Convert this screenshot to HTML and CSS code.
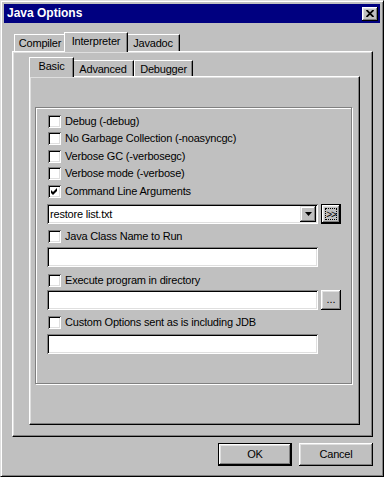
FILE: index.html
```html
<!DOCTYPE html>
<html lang="en">
<head>
    <meta charset="UTF-8">
    <title>Java Options</title>
    <link rel="stylesheet" href="styles.css">
</head>
<body>
    <div class="window">
        <div class="titlebar">
            <span class="title">Java Options</span>
            <span class="close">
                <svg width="8" height="7" viewBox="0 0 8 7"><path d="M0.5 0 L7.5 7 M7.5 0 L0.5 7" stroke="#000" stroke-width="1.8" fill="none"/></svg>
            </span>
        </div>

        <div class="tabs outer-tabs">
            <div class="tab-strip">
                <div class="tab t-compiler">Compiler</div>
                <div class="tab t-interp active">Interpreter</div>
                <div class="tab t-javadoc">Javadoc</div>
            </div>
            <div class="tab-panel outer-panel">
                <div class="tabs inner-tabs">
                    <div class="tab-strip">
                        <div class="tab t-basic active">Basic</div>
                        <div class="tab t-advanced">Advanced</div>
                        <div class="tab t-debugger">Debugger</div>
                    </div>
                    <div class="tab-panel inner-panel">
                        <div class="group">
                            <div class="check-row"><span class="box"></span>Debug (-debug)</div>
                            <div class="check-row"><span class="box"></span>No Garbage Collection (-noasyncgc)</div>
                            <div class="check-row"><span class="box"></span>Verbose GC (-verbosegc)</div>
                            <div class="check-row"><span class="box"></span>Verbose mode (-verbose)</div>
                            <div class="check-row">
                                <span class="box">
                                    <svg width="13" height="13" viewBox="0 0 13 13"><polygon points="3,5 5,7 9,3 9,6 5,10 3,8" fill="#000"/></svg>
                                </span>Command Line Arguments
                            </div>

                            <div class="field-row combo-row">
                                <div class="field combo">
                                    <span class="combo-text">restore list.txt</span>
                                    <span class="combo-arrow">
                                        <svg width="7" height="4" viewBox="0 0 7 4"><polygon points="0,0 7,0 3.5,4" fill="#000"/></svg>
                                    </span>
                                </div>
                                <span class="btn btn-default btn-small"><span class="focus">&gt;&gt;</span></span>
                            </div>

                            <div class="check-row row-class"><span class="box"></span>Java Class Name to Run</div>
                            <div class="field-row input-class">
                                <div class="field"></div>
                            </div>

                            <div class="check-row row-exec"><span class="box"></span>Execute program in directory</div>
                            <div class="field-row input-exec">
                                <div class="field"></div>
                                <span class="btn btn-small btn-dots">...</span>
                            </div>

                            <div class="check-row row-custom"><span class="box"></span>Custom Options sent as is including JDB</div>
                            <div class="field-row input-custom">
                                <div class="field"></div>
                            </div>
                        </div>
                    </div>
                </div>
            </div>
        </div>

        <div class="button-bar">
            <span class="btn btn-default btn-wide">OK</span>
            <span class="btn btn-wide">Cancel</span>
        </div>
    </div>
</body>
</html>
```

FILE: styles.css
```css
* {
    margin: 0;
    padding: 0;
    box-sizing: border-box;
}

body {
    background: #c0c0c0;
    font-family: "Liberation Sans", Arial, sans-serif;
    font-size: 11px;
    letter-spacing: -0.2px;
    line-height: 13px;
    color: #000;
}

/* window frame */
.window {
    width: 384px;
    height: 477px;
    border: 1px solid;
    border-color: #dfdfdf #000 #000 #dfdfdf;
    box-shadow: inset 1px 1px #fff, inset -1px -1px #808080;
    padding: 3px;
    background: #c0c0c0;
}

.titlebar {
    height: 19px;
    background: #000080;
    color: #fff;
    display: flex;
    align-items: center;
    justify-content: space-between;
    padding: 0 2px 0 3px;
}

.title {
    font-weight: bold;
    font-size: 12px;
    letter-spacing: 0;
}

.close {
    width: 16px;
    height: 14px;
    background: #c0c0c0;
    display: flex;
    align-items: center;
    justify-content: center;
    box-shadow: inset -1px -1px #000, inset 1px 1px #fff, inset -2px -2px #808080, inset 2px 2px #dfdfdf;
}

/* tabs */
.outer-tabs {
    margin: 9px 7px 0 8px;
}

.tab-strip {
    display: flex;
    align-items: flex-end;
    height: 19px;
    padding-left: 2px;
}

.tab {
    height: 17px;
    padding-top: 2px;
    text-align: center;
    background: #c0c0c0;
    border: 1px solid;
    border-bottom: none;
    border-color: #fff #000 transparent #fff;
    box-shadow: inset -1px 0 #808080;
}

.tab.active {
    height: 20px;
    margin: 0 -2px -1px;
    position: relative;
    z-index: 1;
}

.t-compiler { width: 52px; }
.t-interp { width: 64px; }
.t-javadoc { width: 54px; }
.t-basic { width: 45px; }
.t-advanced { width: 62px; }
.t-debugger { width: 59px; }

.inner-tabs .tab {
    height: 16px;
}

.inner-tabs .tab.active {
    height: 20px;
}

.tab-panel {
    border: 1px solid;
    border-color: #fff #000 #000 #fff;
    box-shadow: inset -1px -1px #808080, inset 1px 1px #dfdfdf;
    padding: 1px;
}

.outer-panel {
    height: 386px;
}

.inner-tabs {
    margin: 4px 11px 0 15px;
}

.inner-panel {
    height: 349px;
}

/* group box */
.group {
    width: 317px;
    height: 277px;
    margin: 29px 0 0 4px;
    border: 1px solid #808080;
    box-shadow: 1px 1px 0 #fff, inset 1px 1px 0 #fff;
    padding: 4.5px 0 0 11px;
}

.check-row {
    display: flex;
    align-items: center;
    height: 17.5px;
}

.box {
    width: 13px;
    height: 13px;
    margin: 0 4px 0 1px;
    background: #fff;
    box-shadow: inset 1px 1px #808080, inset -1px -1px #fff, inset 2px 2px #000, inset -2px -2px #dfdfdf;
    flex-shrink: 0;
}

.box svg {
    display: block;
}

.field-row {
    display: flex;
    gap: 3px;
}

.field {
    width: 271px;
    height: 20px;
    background: #fff;
    box-shadow: inset 1px 1px #808080, inset -1px -1px #fff, inset 2px 2px #000, inset -2px -2px #dfdfdf;
}

.combo-row { margin-top: 4px; }
.row-class { margin-top: 3px; height: 18px; }
.input-class { margin-top: 2px; }
.row-exec { margin-top: 4px; height: 18px; }
.input-exec { margin-top: 1px; }
.row-custom { margin-top: 3px; height: 18px; }
.input-custom { margin-top: 3px; }

.combo {
    display: flex;
    align-items: center;
    padding: 2px;
}

.combo-text {
    padding-left: 1px;
}

.combo-arrow {
    margin-left: auto;
    width: 16px;
    height: 16px;
    background: #c0c0c0;
    display: flex;
    align-items: center;
    justify-content: center;
    box-shadow: inset -1px -1px #000, inset 1px 1px #dfdfdf, inset -2px -2px #808080, inset 2px 2px #fff;
}

/* buttons */
.btn {
    display: flex;
    align-items: center;
    justify-content: center;
    background: #c0c0c0;
    box-shadow: inset -1px -1px #000, inset 1px 1px #fff, inset -2px -2px #808080, inset 2px 2px #dfdfdf;
}

.btn-default {
    border: 1px solid #000;
}

.btn-small {
    width: 20px;
    height: 20px;
}

.btn-small .focus {
    width: 12px;
    height: 12px;
    border: 1px dotted #000;
    display: flex;
    align-items: center;
    justify-content: center;
    letter-spacing: -1px;
    font-size: 10px;
}

.btn-dots {
    align-items: flex-end;
    padding-bottom: 4px;
    letter-spacing: 0;
}

.button-bar {
    display: flex;
    justify-content: flex-end;
    gap: 7px;
    margin: 6px 7px 0 0;
}

.btn-wide {
    width: 74px;
    height: 23px;
}
```
